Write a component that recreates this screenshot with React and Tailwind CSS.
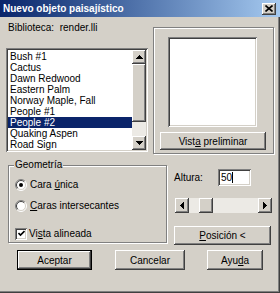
import React from 'react';

const raised = 'bg-[#d4d0c8] shadow-[inset_-1px_-1px_0_#404040,inset_1px_1px_0_#ffffff,inset_-2px_-2px_0_#808080]';
const sunken = 'shadow-[inset_1px_1px_0_#808080,inset_-1px_-1px_0_#ffffff,inset_2px_2px_0_#404040,inset_-2px_-2px_0_#d4d0c8]';
const etched = 'border border-[#808080] shadow-[inset_1px_1px_0_#ffffff,1px_1px_0_#ffffff]';

const items = [
  'Bush #1',
  'Cactus',
  'Dawn Redwood',
  'Eastern Palm',
  'Norway Maple, Fall',
  'People #1',
  'People #2',
  'Quaking Aspen',
  'Road Sign',
];

function Arrow({ dir }) {
  const paths = {
    up: 'M3 0h1v1h1v1h1v1h1v1H0V3h1V2h1V1h1z',
    down: 'M0 0h7v1h-1v1h-1v1h-1v1h-1V3H2V2H1V1H0z',
    left: 'M0 3h1v-1h1v-1h1v-1h1v7h-1v-1h-1v-1h-1v-1h-1z',
    right: 'M0 0h1v1h1v1h1v1h1v1h-1v1h-1v1h-1v1H0z',
  };
  const vertical = dir === 'up' || dir === 'down';
  return (
    <svg width={vertical ? 7 : 4} height={vertical ? 4 : 7} viewBox={vertical ? '0 0 7 4' : '0 0 4 7'}>
      <path d={paths[dir]} fill="#000" />
    </svg>
  );
}

function Radio({ checked }) {
  return (
    <svg width="12" height="12" viewBox="0 0 12 12" className="shrink-0">
      <circle cx="6" cy="6" r="5" fill="#fff" />
      <path d="M2.1 9.9 A5.5 5.5 0 0 1 9.9 2.1" stroke="#808080" fill="none" />
      <path d="M9.9 2.1 A5.5 5.5 0 0 1 2.1 9.9" stroke="#fff" fill="none" />
      <path d="M2.8 9.2 A4.5 4.5 0 0 1 9.2 2.8" stroke="#404040" fill="none" />
      <path d="M9.2 2.8 A4.5 4.5 0 0 1 2.8 9.2" stroke="#d4d0c8" fill="none" />
      {checked && <circle cx="6" cy="6" r="2" fill="#000" />}
    </svg>
  );
}

function Button({ children, className = '', isDefault }) {
  if (isDefault) {
    return (
      <div className={`border border-black ${className}`}>
        <div className={`${raised} h-full flex items-center justify-center`}>{children}</div>
      </div>
    );
  }
  return <div className={`${raised} flex items-center justify-center ${className}`}>{children}</div>;
}

export default function App() {
  return (
    <div className="w-[280px] h-[293px] bg-[#d4d0c8] flex flex-col font-['Liberation_Sans',Arial,sans-serif] text-[10px] text-black shadow-[inset_-1px_-1px_0_#404040,inset_-2px_-2px_0_#808080] overflow-hidden">
      {/* title bar */}
      <div className="h-[17px] shrink-0 bg-gradient-to-r from-[#0a246a] to-[#a6caf0] flex items-center justify-between pl-[3px] pr-[4px]">
        <span className="text-white font-bold text-[10px] leading-none">Nuevo objeto paisajístico</span>
        <div className={`${raised} w-[14px] h-[12px] flex items-center justify-center`}>
          <svg width="8" height="7" viewBox="0 0 8 7">
            <path d="M0.5 0.5 L7.5 6.5 M7.5 0.5 L0.5 6.5" stroke="#000" strokeWidth="1.6" />
          </svg>
        </div>
      </div>

      {/* top section */}
      <div className="flex">
        <div className="ml-[6px] w-[142px] flex flex-col">
          <div className="h-[31px] pt-[5px] pl-[2px] leading-[12px]">Biblioteca:&nbsp; render.lli</div>
          <div className={`bg-white h-[104px] p-[2px] flex ${sunken}`}>
            <div className="flex-1 flex flex-col pt-[1px]">
              {items.map((it) => (
                <div
                  key={it}
                  className={`h-[11px] leading-[11px] pl-[2px] whitespace-nowrap ${it === 'People #2' ? 'bg-[#0a246a] text-white' : ''}`}
                >
                  {it}
                </div>
              ))}
            </div>
            <div className="w-[14px] flex flex-col bg-[#d4d0c8]">
              <div className={`${raised} h-[14px] flex items-center justify-center`}>
                <Arrow dir="up" />
              </div>
              <div className={`${raised} h-[58px]`} />
              <div className="flex-1 bg-[#eceae5]" />
              <div className={`${raised} h-[14px] flex items-center justify-center`}>
                <Arrow dir="down" />
              </div>
            </div>
          </div>
        </div>

        <div className={`ml-[5px] mt-[10px] w-[121px] h-[127px] flex flex-col ${etched}`}>
          <div className={`ml-[14px] mt-[9px] w-[89px] h-[90px] bg-white ${sunken}`} />
          <Button className="ml-[6px] mt-[5px] w-[106px] h-[18px]">
            Vist<span className="underline">a</span>&nbsp;preliminar
          </Button>
        </div>
      </div>

      {/* middle section */}
      <div className="flex mt-[11px]">
        <div className={`relative ml-[8px] w-[159px] h-[78px] ${etched} flex flex-col pl-[6px] pt-[12px]`}>
          <span className="absolute left-[5px] top-[-7px] px-[1px] bg-[#d4d0c8] leading-[12px]">Geometría</span>
          <div className="h-[13px] flex items-center gap-[3px]">
            <Radio checked />
            <span>Cara <span className="underline">ú</span>nica</span>
          </div>
          <div className="h-[13px] mt-[8px] flex items-center gap-[3px]">
            <Radio />
            <span><span className="underline">C</span>aras intersecantes</span>
          </div>
          <div className="h-[13px] mt-[15px] flex items-center gap-[2px]">
            <div className={`w-[12px] h-[12px] bg-white shrink-0 flex items-center justify-center ${sunken}`}>
              <svg width="7" height="7" viewBox="0 0 7 7">
                <path d="M0.5 3 L2.5 5 L6.5 1" stroke="#000" strokeWidth="1.6" fill="none" />
              </svg>
            </div>
            <span>Vi<span className="underline">s</span>ta alineada</span>
          </div>
        </div>

        <div className="ml-[7px] w-[98px] flex flex-col">
          <div className="mt-[4px] h-[17px] flex items-center">
            <span className="w-[44px]">Altura:</span>
            <div className={`w-[33px] h-[17px] bg-white ${sunken} flex items-center pl-[3px]`}>
              <span>50</span>
              <span className="w-[1px] h-[11px] bg-black" />
            </div>
          </div>
          <div className="mt-[12px] ml-[1px] w-[97px] h-[15px] flex">
            <div className={`${raised} w-[14px] flex items-center justify-center`}>
              <Arrow dir="left" />
            </div>
            <div className="w-[10px] bg-[#eceae5]" />
            <div className={`${raised} w-[14px]`} />
            <div className="flex-1 bg-[#eceae5]" />
            <div className={`${raised} w-[14px] flex items-center justify-center`}>
              <Arrow dir="right" />
            </div>
          </div>
          <Button className="mt-[13px] w-[97px] h-[19px]">
            <span className="underline">P</span>osición &lt;
          </Button>
        </div>
      </div>

      {/* bottom buttons */}
      <div className="flex mt-[5px]">
        <Button isDefault className="ml-[17px] w-[75px] h-[20px]">Aceptar</Button>
        <Button className="ml-[23px] w-[70px] h-[20px]">Cancelar</Button>
        <Button className="ml-[22px] w-[56px] h-[20px]">
          Ayu<span className="underline">d</span>a
        </Button>
      </div>
    </div>
  );
}
